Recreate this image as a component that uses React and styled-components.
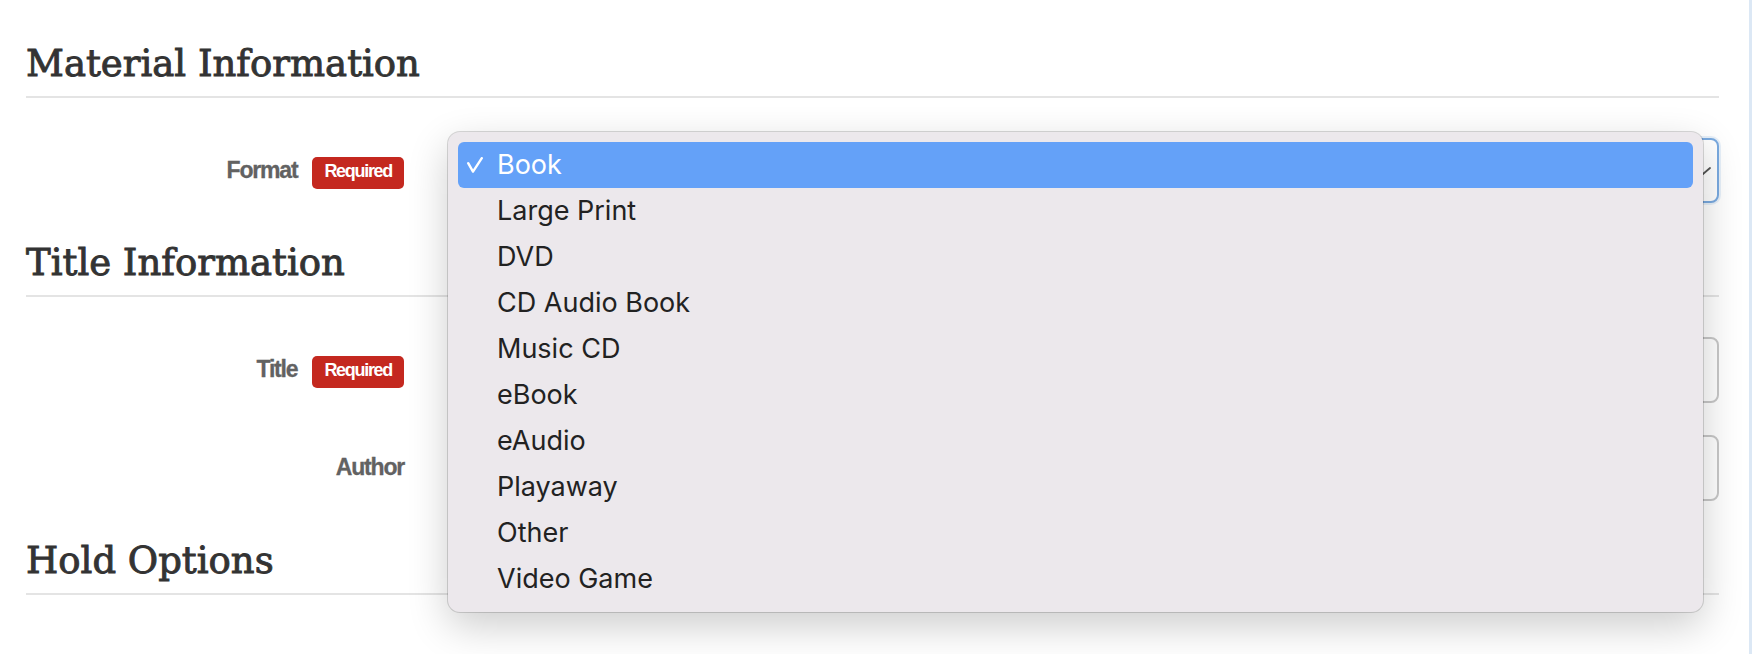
import React from 'react';
import styled, { createGlobalStyle } from 'styled-components';

const GlobalStyle = createGlobalStyle`
  html, body {
    margin: 0;
    padding: 0;
    background: #fff;
  }
  body {
    font-family: "Liberation Sans", Arial, sans-serif;
  }
`;

const Page = styled.div`
  box-sizing: border-box;
  width: 1752px;
  min-height: 654px;
  padding: 42px 30px 0 26px;
  border-right: 3px solid #dce8f5;
  overflow: hidden;
`;

const Section = styled.section`
  margin-top: ${props => (props.$first ? 0 : 38)}px;
`;

const Heading = styled.h2`
  margin: 0;
  padding-bottom: 10px;
  border-bottom: 2px solid #e4e4e4;
  font-family: "DejaVu Serif", "Liberation Serif", serif;
  font-weight: 400;
  font-size: 37px;
  line-height: 44px;
  color: #333;
  -webkit-text-stroke: 0.9px #333;
`;

const Fields = styled.div`
  display: flex;
  flex-direction: column;
  gap: 32px;
  padding-top: 40px;
`;

const FieldRow = styled.div`
  position: relative;
  display: grid;
  grid-template-columns: 378px 1fr;
  column-gap: 48px;
`;

const LabelCell = styled.div`
  display: flex;
  justify-content: flex-end;
  align-items: flex-start;
  gap: 15px;
  padding-top: 19px;
`;

const Label = styled.label`
  font-family: "Liberation Sans", Arial, sans-serif;
  font-weight: 700;
  font-size: 23px;
  line-height: 26px;
  letter-spacing: -1.2px;
  color: #626262;
  -webkit-text-stroke: 0.3px #626262;
`;

const Badge = styled.span`
  box-sizing: border-box;
  height: 32px;
  padding: 0 12px 4px;
  border-radius: 5px;
  background: #c4281f;
  color: #fff;
  font-family: "Liberation Sans", Arial, sans-serif;
  font-weight: 700;
  font-size: 18px;
  line-height: 29px;
  letter-spacing: -1.3px;
`;

const TextInput = styled.input`
  box-sizing: border-box;
  width: 100%;
  height: 66px;
  margin: 0;
  border: 2px solid #c8c8c8;
  border-radius: 8px;
  background: #fff;
  outline: none;
`;

const SelectBox = styled.div`
  box-sizing: border-box;
  height: 65px;
  display: flex;
  align-items: center;
  justify-content: flex-end;
  padding-right: 6px;
  border: 2px solid #7aaae0;
  border-radius: 8px;
  background: #fff;
  box-shadow: 0 0 0 2px rgba(122, 170, 224, 0.18);
`;

const Menu = styled.ul`
  position: absolute;
  top: -6px;
  left: 422px;
  z-index: 10;
  box-sizing: border-box;
  width: 1255px;
  margin: 0;
  padding: 10px;
  list-style: none;
  background: #ece8ec;
  border-radius: 12px;
  box-shadow: 0 0 0 1px rgba(0, 0, 0, 0.15), 0 14px 40px rgba(0, 0, 0, 0.2);
`;

const MenuItem = styled.li`
  display: flex;
  align-items: center;
  height: 46px;
  padding-left: 9px;
  border-radius: 6px;
  background: ${props => (props.$active ? '#64a1f8' : 'transparent')};
  color: ${props => (props.$active ? '#fff' : '#222')};
  font-family: Inter, "Noto Sans", sans-serif;
  font-size: 27px;
  line-height: 48px;
`;

const CheckSlot = styled.span`
  display: flex;
  align-items: center;
  width: 30px;
  height: 46px;
`;

const formats = [
  'Book',
  'Large Print',
  'DVD',
  'CD Audio Book',
  'Music CD',
  'eBook',
  'eAudio',
  'Playaway',
  'Other',
  'Video Game',
];

const Check = () => (
  <svg width="16" height="16" viewBox="0 0 16 16" fill="none">
    <polyline
      points="1.2,6.2 6,14.6 14.8,1.2"
      stroke="#fff"
      strokeWidth="2.4"
      strokeLinecap="round"
      strokeLinejoin="round"
    />
  </svg>
);

const Chevron = () => (
  <svg width="16" height="8" viewBox="0 0 16 8" fill="none">
    <polyline
      points="1,1 8,7 15,1"
      stroke="#555"
      strokeWidth="1.8"
      strokeLinecap="round"
      strokeLinejoin="round"
    />
  </svg>
);

const App = () => {
  const selected = 'Book';

  return (
    <Page>
      <GlobalStyle />
      <Section $first>
        <Heading>Material Information</Heading>
        <Fields>
          <FieldRow>
            <LabelCell>
              <Label>Format</Label>
              <Badge>Required</Badge>
            </LabelCell>
            <SelectBox>
              <Chevron />
            </SelectBox>
            <Menu>
              {formats.map(name => (
                <MenuItem key={name} $active={name === selected}>
                  <CheckSlot>{name === selected && <Check />}</CheckSlot>
                  {name}
                </MenuItem>
              ))}
            </Menu>
          </FieldRow>
        </Fields>
      </Section>

      <Section>
        <Heading>Title Information</Heading>
        <Fields>
          <FieldRow>
            <LabelCell>
              <Label>Title</Label>
              <Badge>Required</Badge>
            </LabelCell>
            <TextInput type="text" readOnly />
          </FieldRow>
          <FieldRow>
            <LabelCell>
              <Label>Author</Label>
            </LabelCell>
            <TextInput type="text" readOnly />
          </FieldRow>
        </Fields>
      </Section>

      <Section>
        <Heading>Hold Options</Heading>
      </Section>
    </Page>
  );
};

export default App;
